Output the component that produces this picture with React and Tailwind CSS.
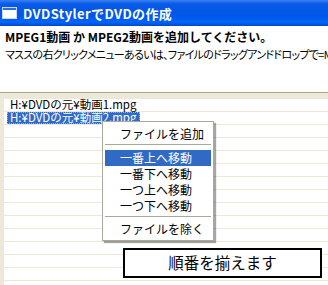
import React from 'react'

const rows = Array.from({ length: 14 })

function WinIcon() {
  return (
    <svg width="15" height="12" viewBox="0 0 15 12" className="shrink-0">
      <rect x="0.5" y="0.5" width="14" height="11" fill="#ffffff" stroke="#c8d8f8" />
      <rect x="1" y="1" width="13" height="2" fill="#2a6ee8" />
    </svg>
  )
}

function MenuItem({ children, active }) {
  return (
    <div
      className={`mx-[2px] h-[16px] pl-[15px] flex items-center text-[12px] leading-none ${
        active ? 'bg-[#316ac5] text-white' : 'text-black'
      }`}
    >
      {children}
    </div>
  )
}

export default function App() {
  return (
    <div className="relative w-[328px] h-[285px] overflow-hidden bg-white font-['Noto_Sans_CJK_JP','Noto_Sans',sans-serif] text-black">
      <div className="h-[26px] flex items-center gap-[6px] pl-[2px] bg-[linear-gradient(to_bottom,#3a80f2,#0a5ae8_15%,#0056e6_60%,#0066fc_85%,#0048cc)]">
        <WinIcon />
        <span className="text-white font-bold text-[13px] leading-none tracking-[0.4px]">DVDStylerでDVDの作成</span>
      </div>

      <div className="pl-[5px] pt-[4px]">
        <p className="font-bold text-[12px] leading-[14px] whitespace-nowrap">MPEG1動画 か MPEG2動画を追加してください。</p>
        <p className="mt-[3px] text-[11px] leading-[14px] whitespace-nowrap tracking-[-0.7px] [font-feature-settings:'palt']">
          マススの右クリックメニューあるいは、ファイルのドラッグアンドドロップで=M
        </p>
      </div>

      <div className="absolute left-0 right-0 top-[92px] bottom-0 border-t border-[#a7a28d] flex">
        <div className="w-[4px] bg-[#ece9d8]" />
        <div className="flex-1 flex flex-col">
          <div className="h-[6px] bg-[#ece9d8] shrink-0" />
          {rows.map((_, i) => (
            <div key={i} className="h-[13px] shrink-0 border-b border-[#ece9d8] flex items-center">
              {i === 0 && (
                <span className="ml-[3px] px-[3px] h-[12px] flex items-center text-[11.5px] leading-none whitespace-nowrap">H:¥DVDの元¥動画1.mpg</span>
              )}
              {i === 1 && (
                <span className="ml-[3px] px-[3px] h-[12px] flex items-center bg-[#316ac5] text-white text-[11.5px] leading-none whitespace-nowrap outline-1 outline-dotted outline-[#e8a040] -outline-offset-1">
                  H:¥DVDの元¥動画2.mpg
                </span>
              )}
            </div>
          ))}
        </div>
      </div>

      <div className="absolute left-[102px] top-[121px] w-[112px] border border-[#aca899] bg-white pt-[3px] pb-[3px] shadow-[2px_2px_1px_rgba(0,0,0,0.35)]">
        <div className="h-[17px] pl-[17px] flex items-center text-[12px] leading-none">ファイルを追加</div>
        <div className="mx-[2px] mt-[2px] mb-[5px] border-t border-[#aca899]" />
        <MenuItem active>一番上へ移動</MenuItem>
        <MenuItem>一番下へ移動</MenuItem>
        <MenuItem>一つ上へ移動</MenuItem>
        <MenuItem>一つ下へ移動</MenuItem>
        <div className="mx-[2px] mt-[2px] mb-[4px] border-t border-[#aca899]" />
        <div className="h-[16px] pl-[17px] flex items-center text-[12px] leading-none">ファイルを除く</div>
      </div>

      <div className="absolute left-[123px] top-[248px] w-[199px] h-[30px] border-2 border-black bg-white flex items-center justify-center text-[15.5px] leading-none">
        順番を揃えます
      </div>
    </div>
  )
}
